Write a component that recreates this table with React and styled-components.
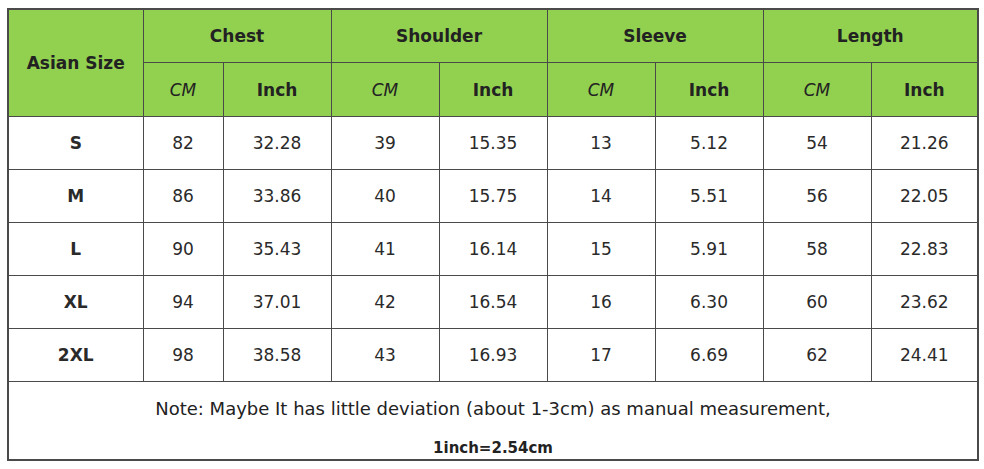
import React from 'react';
import styled, { createGlobalStyle } from 'styled-components';

const GlobalStyle = createGlobalStyle`
  body {
    margin: 0;
    background: #ffffff;
    font-family: "Comic Sans MS", "DejaVu Sans", sans-serif;
    color: #222;
  }
`;

const Page = styled.div`
  padding: 8px 0 0 7px;
`;

const Table = styled.table`
  border-collapse: collapse;
  table-layout: fixed;
  width: 971px;
  border: 2px solid #4a4a4a;
`;

const Head = styled.th`
  background: #92d050;
  border: 1.5px solid #4a4a4a;
  font-size: 17px;
  height: ${props => props.h || 52}px;
  padding: 0;
  text-align: center;
  font-style: ${props => (props.italic ? 'italic' : 'normal')};
  font-weight: ${props => (props.italic ? 'normal' : 'bold')};
`;

const Cell = styled.td`
  border: 1.5px solid #4a4a4a;
  height: 52px;
  padding: 0;
  text-align: center;
  font-size: 17px;
  font-family: "DejaVu Sans", sans-serif;
  color: #2a2a2a;
`;

const SizeCell = styled(Cell)`
  font-family: "Comic Sans MS", "DejaVu Sans", sans-serif;
  font-weight: bold;
`;

const NoteCell = styled.td`
  border: 1.5px solid #4a4a4a;
  height: 77px;
  padding: 0;
  text-align: center;
  vertical-align: top;
`;

const NoteLine = styled.div`
  font-size: ${props => props.size}px;
  font-weight: ${props => (props.bold ? 'bold' : 'normal')};
  margin-top: ${props => props.top}px;
  line-height: 20px;
`;

const groups = ['Chest', 'Shoulder', 'Sleeve', 'Length'];
const widths = [135, 80, 108, 108, 108, 108, 108, 108, 107];

const rows = [
  ['S', '82', '32.28', '39', '15.35', '13', '5.12', '54', '21.26'],
  ['M', '86', '33.86', '40', '15.75', '14', '5.51', '56', '22.05'],
  ['L', '90', '35.43', '41', '16.14', '15', '5.91', '58', '22.83'],
  ['XL', '94', '37.01', '42', '16.54', '16', '6.30', '60', '23.62'],
  ['2XL', '98', '38.58', '43', '16.93', '17', '6.69', '62', '24.41'],
];

export default function App() {
  return (
    <Page>
      <GlobalStyle />
      <Table>
        <colgroup>
          {widths.map((w, i) => <col key={i} style={{ width: w }} />)}
        </colgroup>
        <thead>
          <tr>
            <Head rowSpan={2}>Asian Size</Head>
            {groups.map(g => <Head key={g} colSpan={2} h={52}>{g}</Head>)}
          </tr>
          <tr>
            {groups.map(g => (
              <React.Fragment key={g}>
                <Head italic h={53}>CM</Head>
                <Head h={53}>Inch</Head>
              </React.Fragment>
            ))}
          </tr>
        </thead>
        <tbody>
          {rows.map(r => (
            <tr key={r[0]}>
              <SizeCell>{r[0]}</SizeCell>
              {r.slice(1).map((v, i) => <Cell key={i}>{v}</Cell>)}
            </tr>
          ))}
          <tr>
            <NoteCell colSpan={9}>
              <NoteLine size={18} top={17}>
                Note: Maybe It has little deviation (about 1-3cm) as manual measurement,
              </NoteLine>
              <NoteLine size={15} bold top={19}>1inch=2.54cm</NoteLine>
            </NoteCell>
          </tr>
        </tbody>
      </Table>
    </Page>
  );
}
